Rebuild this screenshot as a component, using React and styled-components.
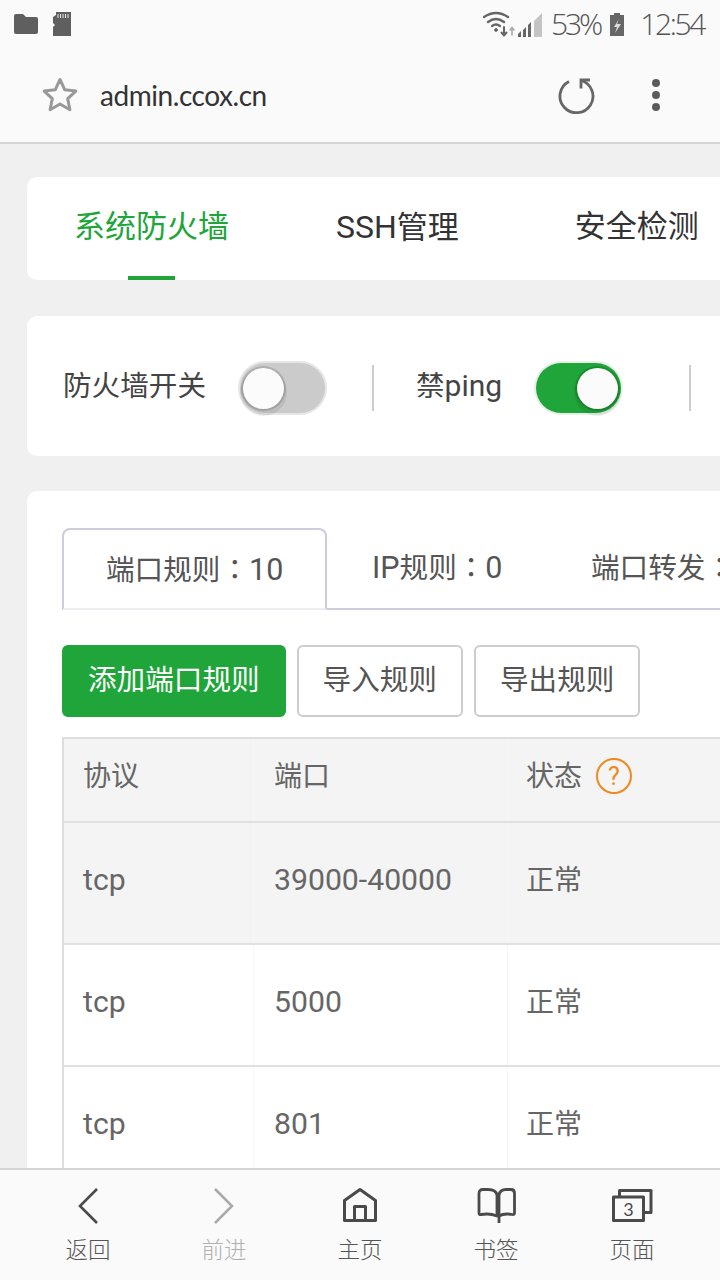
import React from 'react'
import styled, { createGlobalStyle } from 'styled-components'

const Global = createGlobalStyle`
html,body{margin:0;padding:0;background:#f0f0f0;}
*{box-sizing:border-box;}
#root{width:720px;height:1280px;overflow:hidden;font-family:Roboto,"Noto Sans CJK SC",sans-serif;}
`
const Screen = styled.div`
display:flex;
flex-direction:column;
width:720px;
height:1280px;
overflow:hidden;
background:#f0f0f0;
`
const StatusBar = styled.div`
display:flex;
align-items:center;
justify-content:space-between;
height:48px;
flex-shrink:0;
padding:0 16px 0 13px;
background:#fafafa;
.left{display:flex;align-items:center;gap:14px;}
.right{display:flex;align-items:center;color:#555;}
`
const Percent = styled.span`
font:300 30px/1 "Open Sans",sans-serif;
letter-spacing:-3px;
margin:0 9px 0 8px;
`
const Clock = styled.span`
font:300 30px/1 "Open Sans",sans-serif;
letter-spacing:-2.4px;
margin-left:15px;
`
const AddressBar = styled.div`
display:flex;
align-items:center;
height:96px;
flex-shrink:0;
padding:0 0 0 42px;
background:#fafafa;
border-bottom:2px solid #d4d4d4;
`
const Url = styled.div`
font:400 28px/1 Lato,sans-serif;
color:#333;
margin-left:22px;
flex:1;
letter-spacing:-0.45px;
`
const BarIcon = styled.svg`
display:block;
flex-shrink:0;
margin-right:${p=>p.$gap||0}px;
`
const Content = styled.div`
flex:1;
min-height:0;
overflow:hidden;
padding:33px 0 0 27px;
display:flex;
flex-direction:column;
gap:35px;
`
const Card = styled.div`
width:760px;
flex-shrink:0;
background:#fff;
border-radius:10px;
`
const TopTabs = styled(Card)`
display:flex;
height:103px;
padding-left:47px;
`
const TopTab = styled.div`
position:relative;
flex-shrink:0;
height:100%;
margin-right:${p=>p.$gap}px;
line-height:100px;
font-size:31px;
white-space:nowrap;
color:${p=>p.$active?'#20a53a':'#333'};
em{font-style:normal;font-size:32px;}
&::after{
  content:'';
  display:${p=>p.$active?'block':'none'};
  position:absolute;
  left:54px;
  bottom:0;
  width:47px;
  height:4px;
  background:#20a53a;
}
`
const SwitchCard = styled(Card)`
display:flex;
align-items:center;
height:140px;
padding:4px 0 0 36px;
margin-top:1px;
`
const SwitchLabel = styled.span`
font-size:28.6px;
color:#444;
white-space:nowrap;
padding-bottom:10px;
margin-right:${p=>p.$gap}px;
em{font-style:normal;font-size:30px;}
`
const Track = styled.div`
display:flex;
align-items:center;
justify-content:${p=>p.$on?'flex-end':'flex-start'};
width:85px;
height:50px;
flex-shrink:0;
padding:0 3px;
border-radius:25px;
background:${p=>p.$on?'#20a53a':'#cbcbcb'};
box-shadow:0 0 0 2px ${p=>p.$on?'#e6efe8':'#e6e6e6'};
`
const Knob = styled.div`
width:41px;
height:41px;
border-radius:50%;
background:#fbfbfb;
box-shadow:0 0 0 2px rgba(0,0,0,.14),0 4px 0 3px rgba(0,0,0,.07);
`
const Sep = styled.div`
width:2px;
height:46px;
flex-shrink:0;
background:#ccc;
margin:0 ${p=>p.$right}px 0 ${p=>p.$left}px;
`
const RulesCard = styled(Card)`
height:800px;
padding:37px 0 0 35px;
overflow:hidden;
`
const RuleTabs = styled.div`
display:flex;
height:82px;
border-bottom:2px solid #ccccdd;
`
const RuleTab = styled.div`
flex-shrink:0;
height:82px;
width:${p=>p.$w}px;
padding-left:${p=>p.$pad}px;
line-height:76px;
font-size:30.500px;
white-space:nowrap;
color:#555;
${p=>p.$active?`
  background:#fff;
  border:2px solid #ccccdd;
  border-bottom:2px solid #eeeef2;
  border-radius:8px 8px 0 0;
`:''}
`
const Zh = styled.span`
font-size:${p=>p.$size||28.6}px;
`
const Colon = styled.span`
font-family:"Noto Sans CJK TC",sans-serif;
font-size:28.6px;
`
const Buttons = styled.div`
display:flex;
gap:11px;
margin:35px 0 20px;
`
const Button = styled.div`
height:72px;
line-height:66px;
padding:0 24px;
font-size:28.6px;
border-radius:6px;
white-space:nowrap;
color:${p=>p.$primary?'#fff':'#555'};
background:${p=>p.$primary?'#20a53a':'#fff'};
border:2px solid ${p=>p.$primary?'#20a53a':'#ccc'};
`
const Table = styled.div`
width:700px;
border:2px solid #ddd;
border-bottom:0;
`
const Row = styled.div`
display:grid;
grid-template-columns:189px 254px 1fr;
height:${p=>p.$head?84:122}px;
background:${p=>p.$shade?'#f4f4f4':'#fff'};
border-bottom:2px solid #e0e0e0;
`
const Cell = styled.div`
display:flex;
align-items:center;
gap:14px;
padding-left:${p=>p.$pad}px;
padding-bottom:${p=>p.$lift}px;
font-size:30.2px;
color:#666;
white-space:nowrap;
&+&{border-left:1px solid #f7f7f7;}
`
const Help = styled.span`
display:inline-flex;
align-items:center;
justify-content:center;
width:36px;
height:36px;
margin-top:4px;
border-radius:50%;
border:2px solid #f0891a;
color:#f0891a;
font-size:25px;
line-height:1;
`
const BottomNav = styled.div`
display:flex;
justify-content:center;
height:112px;
flex-shrink:0;
padding-top:17px;
background:#fafafa;
border-top:2px solid #d4d4d4;
`
const NavItem = styled.div`
display:flex;
flex-direction:column;
align-items:center;
width:136px;
svg{display:block;height:38px;}
span{
  margin-top:12px;
  font-size:22.5px;
  font-weight:300;
  line-height:26px;
  color:${p=>p.$off?'#b0b0b0':'#555'};
}
`

const rows = [
  { proto:'tcp', port:'39000-40000', status:'正常', shade:true },
  { proto:'tcp', port:'5000', status:'正常' },
  { proto:'tcp', port:'801', status:'正常' },
]

const App = () => {
  return (
    <Screen>
      <Global/>
      <StatusBar>
        <div className="left">
          <svg width="26" height="22" viewBox="0 0 26 22"><path d="M1 3q0-2 2-2h7l3 3h10q2 0 2 2v13q0 2-2 2H3q-2 0-2-2z" fill="#5f5f5f"/></svg>
          <svg width="18" height="24" viewBox="0 0 18 24"><path d="M3 0h15v24H0V15l2-2-2-2V5l3-2z" fill="#5f5f5f"/><path d="M5 2v4M7.500 2v4M10 2v4M12.500 2v4M15 2v4" stroke="#e8e8e8" strokeWidth="1"/></svg>
        </div>
        <div className="right">
          <svg width="34" height="28" viewBox="0 0 34 28" fill="none" stroke="#666" strokeLinecap="round">
            <path d="M1 7Q13-1 25 7" strokeWidth="2.400"/><path d="M5 12q8-6 16 0" strokeWidth="2.400"/><path d="M9 16q4-3 8 0" strokeWidth="2.200"/>
            <circle cx="13" cy="20" r="1.400" fill="#666"/>
            <path d="M21 17v8M18.500 22.500l2.500 3 2.500-3" strokeWidth="2"/><path d="M29 25v-7M27 20l2-2.500 2 2.500" stroke="#aaa" strokeWidth="1.600"/>
          </svg>
          <svg width="26" height="28" viewBox="0 0 26 28">
            <path d="M25 3v24h-8V11z" fill="#c4c4c4"/>
            <path d="M1 27v-3l3-3v6zM6 27v-7l3-3v10zM11 27V15l3-3v15z" fill="#666"/>
          </svg>
          <Percent>53%</Percent>
          <svg width="16" height="23" viewBox="0 0 16 23"><path d="M5 0h6v2h4v21H1V2h4z" fill="#666"/><path d="M10 6l-5 8h3l-2 6 6-9H8z" fill="#ddd"/></svg>
          <Clock>12:54</Clock>
        </div>
      </StatusBar>
      <AddressBar>
        <svg width="36" height="36" viewBox="0 0 36 36" fill="none" stroke="#999" strokeWidth="3" strokeLinejoin="round"><path d="M18 2.500l4.800 10.300 11 1.300-8.100 7.600 2.200 11.100L18 27l-9.900 5.800 2.200-11.100-8.100-7.600 11-1.300z"/></svg>
        <Url>admin.ccox.cn</Url>
        <BarIcon $gap={56} width="38" height="38" viewBox="0 0 38 38" fill="none" stroke="#666" strokeWidth="2.800">
          <path d="M12 5.500A16.500 16.500 0 1 0 24.500 4.500"/><path d="M33 4H24v8.500"/>
        </BarIcon>
        <BarIcon $gap={59} width="10" height="34" viewBox="0 0 10 34" fill="#5c5c5c"><circle cx="5" cy="5" r="4"/><circle cx="5" cy="17" r="4"/><circle cx="5" cy="29" r="4"/></BarIcon>
      </AddressBar>
      <Content>
        <TopTabs>
          <TopTab $active $gap={107}>系统防火墙</TopTab>
          <TopTab $gap={116}><em>SSH</em>管理</TopTab>
          <TopTab $gap={0}>安全检测</TopTab>
        </TopTabs>
        <SwitchCard>
          <SwitchLabel $gap={34}>防火墙开关</SwitchLabel>
          <Track><Knob/></Track>
          <Sep $left={47} $right={42}/>
          <SwitchLabel $gap={34}>禁<em>ping</em></SwitchLabel>
          <Track $on><Knob/></Track>
          <Sep $left={68} $right={0}/>
        </SwitchCard>
        <RulesCard>
          <RuleTabs>
            <RuleTab $active $w={265} $pad={42}><Zh>端口规则</Zh><Colon>：</Colon>10</RuleTab>
            <RuleTab $w={222} $pad={45}>IP<Zh>规则</Zh><Colon>：</Colon>0</RuleTab>
            <RuleTab $w={222} $pad={42}><Zh>端口转发</Zh><Colon>：</Colon>0</RuleTab>
          </RuleTabs>
          <Buttons>
            <Button $primary>添加端口规则</Button>
            <Button>导入规则</Button>
            <Button>导出规则</Button>
          </Buttons>
          <Table>
            <Row $head $shade>
              <Cell $pad={19} $lift={12}><Zh $size={28}>协议</Zh></Cell>
              <Cell $pad={20} $lift={12}><Zh $size={28}>端口</Zh></Cell>
              <Cell $pad={18} $lift={12}><Zh $size={28}>状态</Zh><Help>?</Help></Cell>
            </Row>
            {rows.map((r)=>(
              <Row key={r.port} $shade={r.shade}>
                <Cell $pad={19} $lift={8}>{r.proto}</Cell>
                <Cell $pad={20} $lift={8}>{r.port}</Cell>
                <Cell $pad={18} $lift={10}><Zh $size={28}>{r.status}</Zh></Cell>
              </Row>
            ))}
          </Table>
        </RulesCard>
      </Content>
      <BottomNav>
        <NavItem>
          <svg width="24" height="38" viewBox="0 0 24 38" fill="none" stroke="#4a4a4a" strokeWidth="2.600"><path d="M21 2L4 19l17 17"/></svg>
          <span>返回</span>
        </NavItem>
        <NavItem $off>
          <svg width="24" height="38" viewBox="0 0 24 38" fill="none" stroke="#aaa" strokeWidth="2.600"><path d="M3 2l17 17L3 36"/></svg>
          <span>前进</span>
        </NavItem>
        <NavItem>
          <svg width="36" height="38" viewBox="0 0 36 38" fill="none" stroke="#4a4a4a" strokeWidth="3" strokeLinejoin="round"><path d="M2.500 13.500L18 2.500l15.500 11V33.500h-31z"/><path d="M12.500 33V19.500h11V33"/></svg>
          <span>主页</span>
        </NavItem>
        <NavItem>
          <svg width="40" height="38" viewBox="0 0 40 38" fill="none" stroke="#4a4a4a" strokeWidth="2.800" strokeLinejoin="round"><path d="M21 8Q20 2.500 12 2.500H7Q3 2.500 3 6.500V26Q3 28 5 27.500 14 26 21 29z"/><path d="M23 36V8Q24 2.500 30 2.500H35Q38.500 2.500 38.500 6.500V26Q38.500 28 36 27.500 28 26 23 29"/></svg>
          <span>书签</span>
        </NavItem>
        <NavItem>
          <svg width="42" height="38" viewBox="0 0 42 38" fill="none" stroke="#4a4a4a" strokeWidth="3" strokeLinejoin="round"><path d="M8.500 9V3.500H40V25.500H33"/><path d="M2.500 10H32.500V33.500H2.500z"/><text x="17.500" y="29" fontSize="18" fill="#4a4a4a" stroke="none" textAnchor="middle" fontFamily="Lato,sans-serif">3</text></svg>
          <span>页面</span>
        </NavItem>
      </BottomNav>
    </Screen>
  )
}

export default App
